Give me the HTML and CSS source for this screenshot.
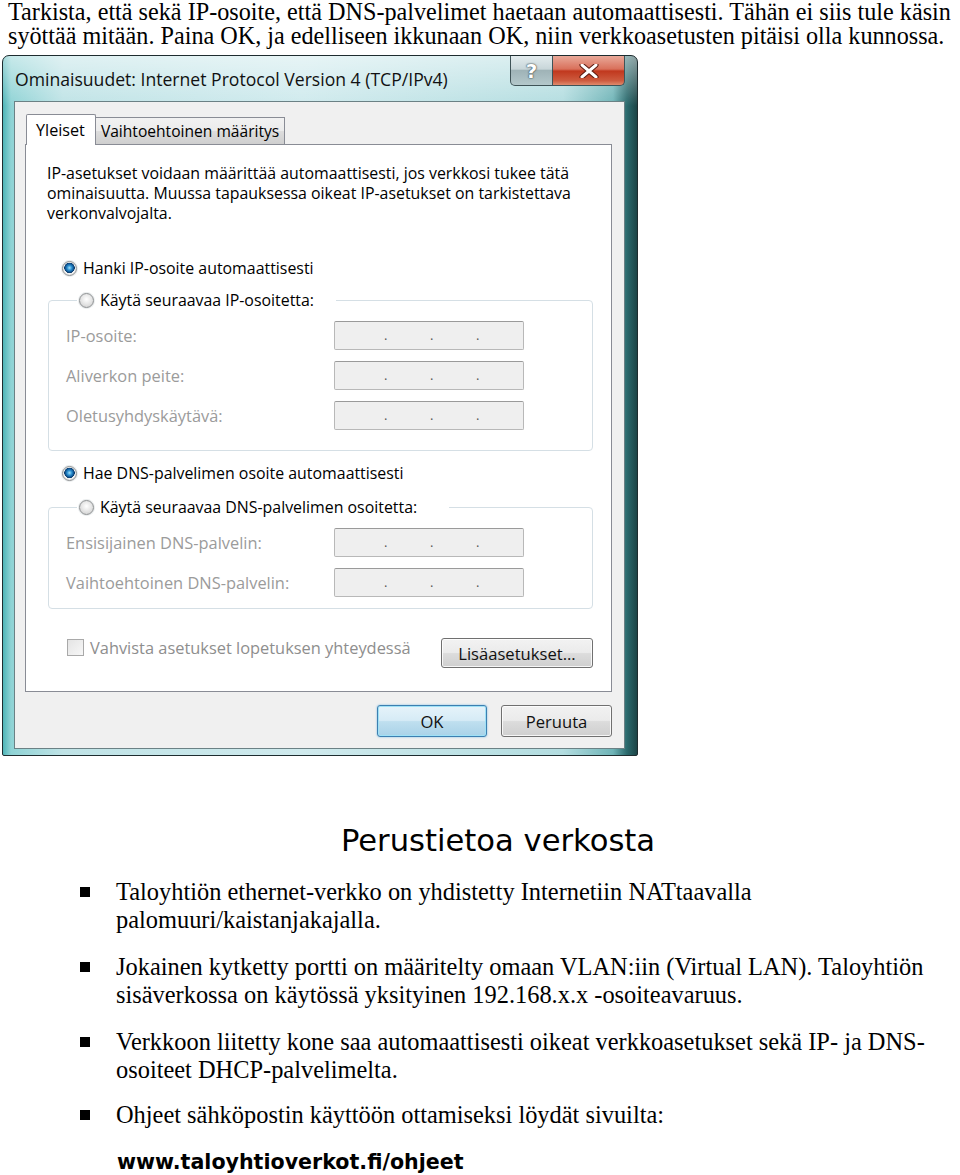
FILE: index.html
```html
<!DOCTYPE html>
<html lang="fi">
<head>
<meta charset="utf-8">
<title>Verkkoasetukset</title>
<link rel="stylesheet" href="styles.css">
</head>
<body>
<p class="intro">Tarkista, että sekä IP-osoite, että DNS-palvelimet haetaan automaattisesti. Tähän ei siis tule käsin syöttää mitään. Paina OK, ja edelliseen ikkunaan OK, niin verkkoasetusten pitäisi olla kunnossa.</p>

<div class="dlg">
  <div class="titlebar">
    <span class="title">Ominaisuudet: Internet Protocol Version 4 (TCP/IPv4)</span>
    <div class="capbtns">
      <span class="cb help">?</span>
      <span class="cb close"><svg width="20" height="14" viewBox="0 0 20 14"><path d="M3 1 L17 13 M17 1 L3 13" stroke="#5a1a10" stroke-width="5" stroke-linecap="round"/><path d="M3 1 L17 13 M17 1 L3 13" stroke="#fff" stroke-width="3" stroke-linecap="round"/></svg></span>
    </div>
  </div>
  <div class="client">
    <div class="tabs">
      <span class="tab active">Yleiset</span>
      <span class="tab">Vaihtoehtoinen määritys</span>
    </div>
    <div class="panel">
      <p class="desc">IP-asetukset voidaan määrittää automaattisesti, jos verkkosi tukee tätä<br>ominaisuutta. Muussa tapauksessa oikeat IP-asetukset on tarkistettava<br>verkonvalvojalta.</p>
      <div class="radio-row r1"><span class="radio on"></span>Hanki IP-osoite automaattisesti</div>
      <fieldset class="group g1">
        <legend><span class="radio"></span>Käytä seuraavaa IP-osoitetta:</legend>
        <div class="field"><span class="lbl">IP-osoite:</span><span class="ip"><i>.</i><i>.</i><i>.</i></span></div>
        <div class="field"><span class="lbl">Aliverkon peite:</span><span class="ip"><i>.</i><i>.</i><i>.</i></span></div>
        <div class="field"><span class="lbl">Oletusyhdyskäytävä:</span><span class="ip"><i>.</i><i>.</i><i>.</i></span></div>
      </fieldset>
      <div class="radio-row r3"><span class="radio on"></span>Hae DNS-palvelimen osoite automaattisesti</div>
      <fieldset class="group g2">
        <legend><span class="radio"></span>Käytä seuraavaa DNS-palvelimen osoitetta:</legend>
        <div class="field"><span class="lbl">Ensisijainen DNS-palvelin:</span><span class="ip"><i>.</i><i>.</i><i>.</i></span></div>
        <div class="field"><span class="lbl">Vaihtoehtoinen DNS-palvelin:</span><span class="ip"><i>.</i><i>.</i><i>.</i></span></div>
      </fieldset>
      <div class="check-row">
        <span class="check"><span class="box"></span>Vahvista asetukset lopetuksen yhteydessä</span>
        <span class="btn adv">Lisäasetukset...</span>
      </div>
    </div>
    <div class="actions">
      <span class="btn ok">OK</span>
      <span class="btn">Peruuta</span>
    </div>
  </div>
</div>

<h2 class="heading">Perustietoa verkosta</h2>
<ul class="points">
  <li>Taloyhtiön ethernet-verkko on yhdistetty Internetiin NATtaavalla palomuuri/kaistanjakajalla.</li>
  <li>Jokainen kytketty portti on määritelty omaan VLAN:iin (Virtual LAN). Taloyhtiön sisäverkossa on käytössä yksityinen 192.168.x.x -osoiteavaruus.</li>
  <li>Verkkoon liitetty kone saa automaattisesti oikeat verkkoasetukset sekä IP- ja DNS-osoiteet DHCP-palvelimelta.</li>
  <li>Ohjeet sähköpostin käyttöön ottamiseksi löydät sivuilta:</li>
</ul>
<p class="url">www.taloyhtioverkot.fi/ohjeet</p>
</body>
</html>
```

FILE: styles.css
```css
html, body { margin: 0; padding: 0; background: #fff; }
body { font-family: "Liberation Serif", "Times New Roman", serif; color: #000; }

.intro {
  margin: 0;
  padding: 0 0 0 8px;
  font-size: 24.2px;
  line-height: 24.3px;
  height: 55px;
}

/* ---------- dialog ---------- */
.dlg {
  width: 636px;
  margin-left: 2px;
  box-sizing: border-box;
  border: 1px solid #1e2c2f;
  border-radius: 7px 7px 2px 2px;
  background:
    linear-gradient(to bottom, rgba(255,255,255,0.5), rgba(255,255,255,0) 50px),
    linear-gradient(to right, #4fb5b8 0, #8fd3d5 8px, #bfe3e6 60px, #cfeaed 300px, #b3dde0 560px, #6fb4b7 610px, #2b6a6d 624px, #1c4446 100%);
  padding-bottom: 6px;
  font-family: "Open Sans", "Noto Sans", sans-serif;
}
.titlebar {
  height: 45px;
  display: flex;
  justify-content: space-between;
  align-items: center;
}
.title {
  padding-left: 12px;
  font-size: 17.6px;
  color: #111;
  margin-top: 1px;
}
.capbtns {
  align-self: flex-start;
  display: flex;
  margin-right: 12px;
}
.cb {
  height: 30px;
  box-sizing: border-box;
  display: flex;
  align-items: center;
  justify-content: center;
  border: 1px solid #3f5357;
  border-top: none;
}
.help {
  width: 43px;
  border-radius: 0 0 0 5px;
  background: linear-gradient(to bottom, #e3ecee 0, #c8d6d9 45%, #9fb3b7 50%, #b4c8cb 100%);
  color: #fff;
  font-weight: 700;
  font-size: 20px;
  font-family: "DejaVu Sans", sans-serif;
  text-shadow: 0 0 2px #2b3a3d, 0 0 1px #2b3a3d;
}
.close {
  width: 72px;
  border-left: none;
  border-radius: 0 0 5px 0;
  background: linear-gradient(to bottom, #e9a999 0, #d9705b 45%, #c1381e 52%, #cd5b3f 85%, #e08a6c 100%);
}

.client {
  margin: 0 12px 0 11px;
  height: 648px;
  box-sizing: border-box;
  border: 1px solid #6b8185;
  background: #f0f0f0;
  padding: 12px 12px 0 10px;
  font-size: 15.9px;
  color: #000;
}
.tabs {
  height: 30px;
  display: flex;
  align-items: flex-end;
  position: relative;
  z-index: 1;
}
.tab {
  height: 27px;
  box-sizing: border-box;
  display: flex;
  align-items: center;
  border: 1px solid #898c95;
  border-bottom: none;
  background: linear-gradient(to bottom, #f2f2f2 0, #ebebeb 50%, #dddddd 51%, #cfcfcf 100%);
  font-size: 15.6px;
}
.tab.active {
  height: 31px;
  margin-bottom: -1px;
  margin-left: 1px;
  padding: 0 10px 0 9px;
  background: #fff;
  font-size: 16.2px;
  border-radius: 2px 2px 0 0;
}
.tab:nth-child(2) { padding: 0 5px 0 5px; border-left: none; }

.panel {
  height: 548px;
  box-sizing: border-box;
  border: 1px solid #898c95;
  background: #fff;
  padding-top: 18px;
}
.desc {
  margin: 0 0 0 21px;
  line-height: 20px;
}
.radio-row, legend {
  display: flex;
  align-items: center;
  gap: 6px;
  height: 20px;
}
.radio-row { padding-left: 36px; }
.r1 { margin-top: 35px; }
.r3 { margin-top: 12px; }

.radio {
  width: 15px;
  height: 15px;
  flex: none;
  box-sizing: border-box;
  border-radius: 50%;
  border: 1px solid #8c8f91;
  background: radial-gradient(circle at 50% 40%, #ffffff 0, #e8e8e8 45%, #c9c9c9 100%);
  box-shadow: 0 0 0 1px #e9eced;
}
.radio.on {
  background: radial-gradient(circle at 50% 45%, #a6e2fb 0, #2a8fd0 25%, #0e4f8b 45%, #0b3a68 52%, #f2f2f2 56%, #d7d7d7 100%);
}

.group {
  margin: 12px 18px 0 22px;
  padding: 11px 0 20px 17px;
  border: 1px solid #d5dfe5;
  border-radius: 4px;
  min-width: 0;
}
.group legend {
  padding: 0 22px 0 2px;
  margin-left: 11px;
}
.g2 { margin-top: 14px; padding-bottom: 11px; }
.g2 legend { padding-right: 32px; }
.field {
  display: grid;
  grid-template-columns: 268px 190px;
  align-items: center;
  margin-bottom: 11px;
}
.field:last-of-type { margin-bottom: 0; }
.lbl { color: #9b9b9b; font-size: 16.4px; }
.ip {
  height: 29px;
  box-sizing: border-box;
  border: 1px solid #b8b8b8;
  border-top-color: #9a9a9a;
  border-radius: 2px;
  background: #efefef;
  display: flex;
  align-items: flex-end;
  padding: 0 0 8px 49px;
  gap: 42px;
  color: #555;
  font-size: 13px;
  line-height: 12px;
}
.ip i { font-style: normal; width: 4px; }

.check-row {
  margin: 28px 18px 0 41px;
  display: flex;
  justify-content: space-between;
  align-items: flex-start;
}
.check {
  display: flex;
  align-items: center;
  gap: 6px;
  height: 20px;
  color: #8e8e8e;
  font-size: 16.4px;
}
.box {
  width: 17px;
  height: 17px;
  box-sizing: border-box;
  border: 1px solid #a9a9a9;
  background: linear-gradient(135deg, #e4e4e4, #f7f7f7);
}

.btn {
  height: 30px;
  box-sizing: border-box;
  display: flex;
  align-items: center;
  justify-content: center;
  border: 1px solid #707070;
  border-radius: 3px;
  background: linear-gradient(to bottom, #f2f2f2 0, #ebebeb 48%, #dcdcdc 52%, #cfcfcf 100%);
  box-shadow: inset 0 0 0 1px rgba(255,255,255,0.8);
  color: #111;
  font-size: 16.6px;
}
.adv { width: 152px; margin-top: 1px; }

.actions {
  display: flex;
  justify-content: flex-end;
  gap: 14px;
  margin-top: 13px;
}
.actions .btn { width: 111px; height: 32px; }
.actions .ok {
  width: 110px;
  border-color: #3c7fb1;
  background: linear-gradient(to bottom, #e6f3fa 0, #d6ebf6 48%, #bfdfef 52%, #a9d2e8 100%);
  box-shadow: inset 0 0 0 1px #9fe1f6, 0 0 2px #6ab6e0;
}

/* ---------- lower text ---------- */
.heading {
  margin: 67px 0 0;
  padding-left: 36px;
  text-align: center;
  font-family: "DejaVu Sans", sans-serif;
  font-weight: 400;
  font-size: 30.6px;
  line-height: 36px;
}
.points {
  list-style: none;
  margin: 19px 25px 0 80px;
  padding: 0;
  font-size: 24.4px;
  line-height: 28px;
}
.points li {
  display: grid;
  grid-template-columns: 36px 1fr;
  margin-bottom: 19px;
}
.points li:nth-child(3) { margin-bottom: 17px; }
.points li::before {
  content: "";
  width: 10px;
  height: 10px;
  margin-top: 9px;
  background: #000;
}
.points li:last-child { margin-bottom: 0; }
.url {
  margin: 19px 0 0 117px;
  font-family: "DejaVu Sans", sans-serif;
  font-weight: 700;
  font-size: 20.6px;
  line-height: 28px;
}
```
